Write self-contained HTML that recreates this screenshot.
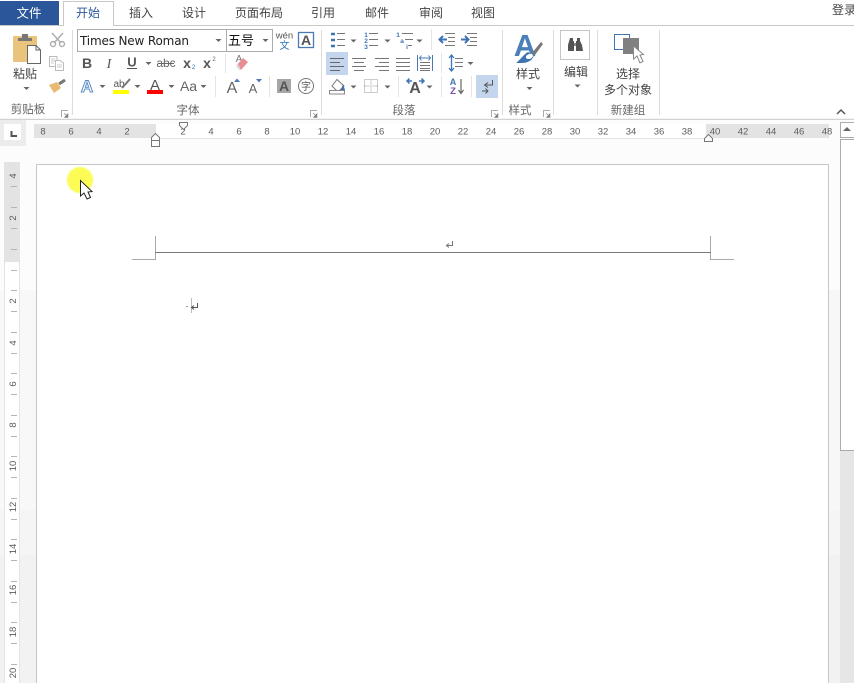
<!DOCTYPE html>
<html><head><meta charset="utf-8"><style>
html,body{margin:0;padding:0;background:#fff;width:854px;height:683px;overflow:hidden}
svg{display:block}
text{font-family:"Liberation Sans","Noto Sans CJK SC",sans-serif;fill:#444}
.t{font-size:12px;text-anchor:middle;fill:#444}
.g{font-size:11.5px;text-anchor:middle;fill:#666}
.r{font-size:9.5px;text-anchor:middle;fill:#5c5c5c}
</style></head><body>
<svg width="854" height="683" viewBox="0 0 854 683" xmlns="http://www.w3.org/2000/svg">
<defs>
<path id="ar" d="M-3 0H3L0 3Z" fill="#666"/>
<g id="dl"><path d="M0.500 7V0.500H7" fill="none" stroke="#aaa"/><path d="M3 3L7 7M7 3.500V7.500H3.500Z" fill="#777" stroke="#888" stroke-width="0.600"/></g>
<filter id="bl"><feGaussianBlur stdDeviation="0.8"/></filter>
</defs>
<rect width="854" height="683" fill="#fff"/>
<!-- tabs -->
<rect x="0" y="1" width="59" height="25" fill="#2b579a"/>
<text x="29" y="17.500" class="t" style="fill:#fff;font-size:12.500px">文件</text>
<path d="M0 25.500H63.500V1.500H113.500V25.500H854" fill="none" stroke="#c8c8c8"/>
<text x="88" y="17" class="t" style="fill:#2b579a">开始</text>
<text x="141" y="17" class="t">插入</text>
<text x="194" y="17" class="t">设计</text>
<text x="259" y="17" class="t">页面布局</text>
<text x="323" y="17" class="t">引用</text>
<text x="377" y="17" class="t">邮件</text>
<text x="431" y="17" class="t">审阅</text>
<text x="483" y="17" class="t">视图</text>
<text x="832" y="14" style="font-size:12px">登录</text>
<path d="M0 119.500H854" stroke="#d2d2d2" stroke-width="1.500"/>
<!-- separators -->
<path d="M72.500 30V115M321.500 30V115M502.500 30V115M553.500 30V115M597.500 30V115M659.500 30V115" stroke="#dcdcdc"/>
<path d="M225.500 54V73M215.500 76V97M269.500 76V97M431.500 29V50M441.500 53V73M398.500 76V97M441.500 76V97M471.500 76V97" stroke="#e4e4e4"/>
<!-- clipboard -->
<rect x="13" y="36" width="24" height="26" rx="1" fill="#eac37c"/>
<path d="M18 41V38H22V34H28V38H32V41Z" fill="#777"/>
<path d="M27.500 45.500H36L40.500 50V63.500H27.500Z" fill="#fff" stroke="#666"/>
<path d="M36 45.500V50H40.500" fill="none" stroke="#666"/>
<text x="25" y="78" class="t">粘贴</text>
<use href="#ar" x="26.500" y="87"/>
<path d="M52 33L61 43M63 33L54 43" stroke="#b0b0b0" stroke-width="1.500"/>
<circle cx="53" cy="44" r="2.500" fill="none" stroke="#b0b0b0" stroke-width="1.500"/><circle cx="62" cy="44" r="2.500" fill="none" stroke="#b0b0b0" stroke-width="1.500"/>
<path d="M49.500 56.500H57V66.500H49.500Z" fill="#fff" stroke="#bbb"/><path d="M55.500 60.500H60L63.500 63V70.500H55.500Z" fill="#fff" stroke="#bbb"/>
<path d="M51 59H55M51 61H55M51 63H54M57 65H62M57 67H62" stroke="#ccc"/>
<path d="M49 85L57 82L61 88L54 93Z" fill="#e9b872"/><path d="M59 84L65 80" stroke="#777" stroke-width="3"/>
<text x="28" y="113" class="g">剪贴板</text>
<use href="#dl" x="61" y="110"/>
<!-- font -->
<rect x="77.500" y="29.500" width="149" height="22" fill="#fff" stroke="#ababab"/>
<rect x="226.500" y="29.500" width="46" height="22" fill="#fff" stroke="#ababab"/>
<text x="80" y="45" textLength="109" lengthAdjust="spacing" style="font-size:12px;fill:#222;font-family:'DejaVu Sans',sans-serif">Times New Roman</text>
<use href="#ar" x="218.500" y="39"/><use href="#ar" x="265.500" y="39"/>
<text x="228" y="45" style="font-size:13px;fill:#111">五号</text>
<text x="284.500" y="38.500" style="font-size:9.500px;text-anchor:middle;fill:#555">wén</text>
<text x="284.500" y="49" style="font-size:10px;text-anchor:middle;fill:#2e75b6">文</text>
<rect x="298.500" y="32.500" width="15" height="15" fill="#fff" stroke="#4a7ab5" stroke-width="1.300"/>
<text x="306" y="45" style="font-size:14px;font-weight:bold;text-anchor:middle;fill:#555">A</text>
<text x="87" y="68" style="font-size:14px;font-weight:bold;text-anchor:middle;fill:#555">B</text>
<text x="109" y="68" style="font-size:14px;font-style:italic;text-anchor:middle;fill:#555;font-family:'Liberation Serif',serif">I</text>
<text x="132" y="66.500" style="font-size:13px;font-weight:bold;text-anchor:middle;fill:#555">U</text><path d="M127 68.500H137" stroke="#555"/>
<use href="#ar" x="148.500" y="62"/>
<text x="166" y="67" style="font-size:12px;text-anchor:middle;fill:#666">abc</text><path d="M158 63.500H174" stroke="#666"/>
<text x="187" y="68" style="font-size:14px;font-weight:bold;text-anchor:middle;fill:#555">x</text><text x="193.500" y="69" style="font-size:6px;text-anchor:middle;fill:#2e75b6">2</text>
<text x="207" y="68" style="font-size:14px;font-weight:bold;text-anchor:middle;fill:#555">x</text><text x="214" y="61" style="font-size:6px;text-anchor:middle;fill:#666">2</text>
<text x="239" y="62" style="font-size:10px;text-anchor:middle;fill:#777">A</text>
<path d="M236 66L243 58L248 62L241 70Z" fill="#e98d94"/><path d="M236 66L239 70H241L238 64" fill="#ddd"/>
<text x="87" y="92" style="font-size:17px;font-weight:bold;text-anchor:middle;fill:#fff;stroke:#5b8bc5;stroke-width:1">A</text>
<use href="#ar" x="102.500" y="85"/>
<text x="119" y="87" style="font-size:10px;text-anchor:middle;fill:#555">ab</text><path d="M122 88L130 79" stroke="#777" stroke-width="2"/>
<rect x="113" y="90" width="16" height="4" fill="#ffff00"/>
<use href="#ar" x="137.500" y="85"/>
<text x="155" y="90" style="font-size:15px;text-anchor:middle;fill:#555">A</text>
<rect x="147" y="90" width="16" height="4" fill="#f00"/>
<use href="#ar" x="171.500" y="85"/>
<text x="188.500" y="91" style="font-size:14px;text-anchor:middle;fill:#666">Aa</text>
<use href="#ar" x="203.500" y="85"/>
<text x="232" y="93" style="font-size:16px;text-anchor:middle;fill:#666">A</text><path d="M234 82H240L237 78.500Z" fill="#4a7ab5"/>
<text x="253" y="93" style="font-size:13px;text-anchor:middle;fill:#666">A</text><path d="M256 79H262L259 82.500Z" fill="#4a7ab5"/>
<rect x="277" y="79" width="14" height="14" fill="#a6a6a6"/>
<text x="284" y="91" style="font-size:14px;font-weight:bold;text-anchor:middle;fill:#555">A</text>
<circle cx="306" cy="86" r="7.500" fill="none" stroke="#777"/>
<text x="306" y="90" style="font-size:10px;text-anchor:middle;fill:#555">字</text>
<text x="188" y="114" class="g">字体</text>
<use href="#dl" x="310" y="110"/>
<!-- paragraph row 1 -->
<path d="M331 34H335M331 40H335M331 46H335" stroke="#3f74b3" stroke-width="2.500"/>
<path d="M337 33.500H345M337 39.500H345M337 45.500H345" stroke="#777"/>
<use href="#ar" x="353.500" y="39.500"/>
<path d="M369 33.500H378M369 39.500H378M369 45.500H378" stroke="#777"/>
<text x="366" y="37" style="font-size:6.500px;text-anchor:middle;fill:#3f74b3;font-weight:bold">1</text><text x="366" y="43" style="font-size:6.500px;text-anchor:middle;fill:#3f74b3;font-weight:bold">2</text><text x="366" y="49" style="font-size:6.500px;text-anchor:middle;fill:#3f74b3;font-weight:bold">3</text>
<use href="#ar" x="387.500" y="39.500"/>
<path d="M402 33.500H413M405 39.500H413M408 45.500H412" stroke="#777"/>
<text x="398" y="37" style="font-size:6.500px;text-anchor:middle;fill:#3f74b3;font-weight:bold">1</text><text x="402" y="43" style="font-size:6.500px;text-anchor:middle;fill:#3f74b3;font-weight:bold">a</text><text x="407" y="49" style="font-size:6.500px;text-anchor:middle;fill:#3f74b3;font-weight:bold">i</text>
<use href="#ar" x="419.500" y="39.500"/>
<path d="M445 33.500H455M448 37.500H455M448 41.500H455M445 45.500H455" stroke="#777"/>
<path d="M447 39.500H440M443 36L439.500 39.500L443 43" fill="none" stroke="#3f74b3" stroke-width="2"/>
<path d="M467 33.500H477M470 37.500H477M470 41.500H477M467 45.500H477" stroke="#777"/>
<path d="M461 39.500H468M465 36L468.500 39.500L465 43" fill="none" stroke="#3f74b3" stroke-width="2"/>
<!-- paragraph row 2 -->
<rect x="326" y="52" width="22" height="23" fill="#c3d6ee"/>
<path d="M330 58.500H344M330 62.500H340M330 66.500H344M330 70.500H340" stroke="#666"/>
<path d="M352 58.500H366M354 62.500H364M352 66.500H366M354 70.500H364" stroke="#777"/>
<path d="M375 58.500H389M379 62.500H389M375 66.500H389M379 70.500H389" stroke="#777"/>
<path d="M396 58.500H410M396 62.500H410M396 66.500H410M396 70.500H410" stroke="#777"/>
<path d="M417.500 55V71M432.500 55V71" stroke="#4a7ab5"/>
<path d="M420 58H430M421.500 55.500L419.500 58L421.500 60.500M428.500 55.500L430.500 58L428.500 60.500" fill="none" stroke="#4a7ab5"/>
<path d="M420 62.500H430M420 65.500H430M420 68.500H430M420 70.500H430" stroke="#777"/>
<path d="M451.500 55V71M449 58L451.500 55L454 58M449 68L451.500 71L454 68" fill="none" stroke="#3f74b3" stroke-width="1.300"/>
<path d="M455 58.500H463M455 62.500H463M455 66.500H463" stroke="#777"/>
<use href="#ar" x="470.500" y="62"/>
<!-- paragraph row 3 -->
<path d="M337 79.500L344 86L338 92L332 86Z" fill="#fff" stroke="#777"/>
<path d="M343 84L345 90H341Z" fill="#3f74b3"/>
<rect x="329.500" y="90.500" width="15" height="3.500" fill="#fff" stroke="#888"/>
<use href="#ar" x="353.500" y="85.500"/>
<path d="M364.500 79.500H377.500V92.500H364.500ZM371 79.500V92.500M364.500 86H377.500" fill="none" stroke="#999" stroke-dasharray="1 1"/>
<use href="#ar" x="387.500" y="85.500"/>
<text x="415" y="93" style="font-size:16px;text-anchor:middle;fill:#555;font-weight:bold">A</text>
<path d="M407 81H412M419 81H424M409.500 78.500L407 81L409.500 83.500M421.500 78.500L424 81L421.500 83.500" fill="none" stroke="#3f74b3" stroke-width="1.500"/>
<use href="#ar" x="429.500" y="85.500"/>
<text x="453" y="85" style="font-size:9px;text-anchor:middle;fill:#3f74b3;font-weight:bold">A</text>
<text x="453" y="94" style="font-size:9.500px;text-anchor:middle;fill:#7a4eac;font-weight:bold">Z</text>
<path d="M461 79V93M458.500 90L461 93.500L463.500 90" fill="none" stroke="#666" stroke-width="1.200"/>
<rect x="476" y="75" width="22" height="23" fill="#c3d6ee"/>
<path d="M492.500 80V85H485M488 82.500L484.500 85L488 87.500" fill="none" stroke="#555"/>
<path d="M482 91H488M485.500 88.500L488 91L485.500 93.500" fill="none" stroke="#555"/>
<text x="404" y="114" class="g">段落</text>
<use href="#dl" x="491" y="110"/>
<!-- styles -->
<text x="525" y="56" style="font-size:31px;font-weight:bold;text-anchor:middle;fill:#4a7fba">A</text>
<path d="M516 63C520 60 524 54 528 52L534 55C533 60 528 63 522 63Z" fill="#3f74b3"/>
<path d="M526 56C529 53 533 53 533 56C532 59 528 60 526 58Z" fill="#fff"/>
<path d="M532 53L541 42L543 44L535 55Z" fill="#777"/>
<text x="528" y="78" class="t">样式</text>
<use href="#ar" x="529.500" y="87"/>
<text x="520" y="114" class="g">样式</text>
<use href="#dl" x="543" y="110"/>
<!-- edit -->
<rect x="560.500" y="30.500" width="29" height="29" fill="#fff" stroke="#c6c6c6"/>
<path d="M570 38H573V41H574V49L574 51H568V45ZM577 38H580V41L582 45L583 51H576V41H577Z" fill="#555"/><path d="M574 43H576V46H574Z" fill="#888"/>
<text x="576" y="76" class="t">编辑</text>
<use href="#ar" x="577.500" y="84.500"/>
<!-- select -->
<rect x="614.500" y="34.500" width="15" height="15" fill="none" stroke="#3f74b3"/>
<rect x="623" y="38" width="16" height="16" fill="#808080"/>
<path d="M633.500 46V59L637 56L640 63L643 61.500L640 55L643.500 54.500Z" fill="#fff" stroke="#888"/>
<text x="628" y="78" class="t">选择</text>
<text x="628" y="94" class="t">多个对象</text>
<text x="628" y="114" class="g">新建组</text>
<path d="M837 114L841 110L845 114" fill="none" stroke="#555" stroke-width="1.500"/>
<!-- canvas backgrounds -->
<rect x="0" y="120" width="854" height="563" fill="#fcfcfc"/>
<rect x="0" y="290" width="36" height="230" fill="#f8f8f8"/>
<rect x="829" y="290" width="11" height="230" fill="#f7f7f7"/>
<rect x="0" y="510" width="36" height="45" fill="#f5f5f5"/>
<rect x="829" y="510" width="11" height="45" fill="#f5f5f5"/>
<rect x="0" y="555" width="36" height="128" fill="#f2f2f2"/>
<rect x="829" y="555" width="11" height="128" fill="#f2f2f2"/>
<!-- horizontal ruler -->
<rect x="0" y="120" width="26" height="26" fill="#ececec"/>
<rect x="4" y="124" width="17" height="16" fill="#fff"/>
<path d="M11.500 131V136H17" fill="none" stroke="#555" stroke-width="2"/>
<rect x="34" y="124" width="122" height="14" fill="#e3e3e3"/>
<rect x="156" y="124" width="550" height="14" fill="#fff"/>
<path d="M156 138.500H706" stroke="#e3e3e3"/>
<rect x="706" y="124" width="123" height="14" fill="#e3e3e3"/>
<text class="r" x="43" y="134.500">8</text><text class="r" x="71" y="134.500">6</text><text class="r" x="99" y="134.500">4</text><text class="r" x="127" y="134.500">2</text>
<text class="r" x="183" y="134.500">2</text><text class="r" x="211" y="134.500">4</text><text class="r" x="239" y="134.500">6</text><text class="r" x="267" y="134.500">8</text><text class="r" x="295" y="134.500">10</text><text class="r" x="323" y="134.500">12</text><text class="r" x="351" y="134.500">14</text><text class="r" x="379" y="134.500">16</text><text class="r" x="407" y="134.500">18</text><text class="r" x="435" y="134.500">20</text><text class="r" x="463" y="134.500">22</text><text class="r" x="491" y="134.500">24</text><text class="r" x="519" y="134.500">26</text><text class="r" x="547" y="134.500">28</text><text class="r" x="575" y="134.500">30</text><text class="r" x="603" y="134.500">32</text><text class="r" x="631" y="134.500">34</text><text class="r" x="659" y="134.500">36</text><text class="r" x="687" y="134.500">38</text><text class="r" x="715" y="134.500">40</text><text class="r" x="743" y="134.500">42</text><text class="r" x="771" y="134.500">44</text><text class="r" x="799" y="134.500">46</text><text class="r" x="827" y="134.500">48</text>
<path d="M179.500 122.500H187.500V125.500L183.500 129.500L179.500 125.500Z" fill="#fff" stroke="#777"/>
<path d="M155.500 133.500L159.500 137.500V146.500H151.500V137.500Z" fill="#fff" stroke="#777"/><path d="M151.500 140.500H159.500" stroke="#777"/>
<path d="M708.500 134.500L712.500 138.500V141.500H704.500V138.500Z" fill="#fff" stroke="#777"/>
<!-- vertical ruler -->
<rect x="4" y="162" width="16" height="100" fill="#e3e3e3"/>
<rect x="4" y="262" width="16" height="421" fill="#e3e3e3"/>
<rect x="5" y="262" width="14" height="421" fill="#fff"/>
<path d="M11 186.500H17M11 207.500H17M11 228.500H17M11 249.500H17M11 270.500H17M11 290.500H17M11 311.500H17M11 332.500H17M11 353.500H17M11 373.500H17M11 394.500H17M11 415.500H17M11 436.500H17M11 456.500H17M11 477.500H17M11 498.500H17M11 519.500H17M11 539.500H17M11 560.500H17M11 581.500H17M11 602.500H17M11 622.500H17M11 643.500H17M11 664.500H17" stroke="#b5b5b5"/>
<text class="r" transform="translate(16 176) rotate(-90)">4</text>
<text class="r" transform="translate(16 218) rotate(-90)">2</text>
<text class="r" transform="translate(16 301) rotate(-90)">2</text>
<text class="r" transform="translate(16 343) rotate(-90)">4</text>
<text class="r" transform="translate(16 384) rotate(-90)">6</text>
<text class="r" transform="translate(16 425) rotate(-90)">8</text>
<text class="r" transform="translate(16 466) rotate(-90)">10</text>
<text class="r" transform="translate(16 507) rotate(-90)">12</text>
<text class="r" transform="translate(16 549) rotate(-90)">14</text>
<text class="r" transform="translate(16 590) rotate(-90)">16</text>
<text class="r" transform="translate(16 632) rotate(-90)">18</text>
<text class="r" transform="translate(16 673) rotate(-90)">20</text>
<!-- page -->
<rect x="36.500" y="164.500" width="792" height="530" fill="#fff" stroke="#c6c6c6"/>
<path d="M155.500 236V259.500H132M710.500 236V259.500H734" fill="none" stroke="#aaa"/>
<path d="M155 252.500H711" stroke="#777"/>
<path d="M452.500 241V245.500H447M449 243.500L446.500 245.500L449 247.500" fill="none" stroke="#777"/>
<path d="M186 306.500H188" stroke="#999"/>
<path d="M191.500 298V313" stroke="#bbb"/>
<path d="M197.500 303V307.500H192M194 305.500L191.500 307.500L194 309.500" fill="none" stroke="#555"/>
<!-- cursor -->
<circle cx="80" cy="180" r="13" fill="#fcfc55" filter="url(#bl)"/>
<path d="M80.500 180.500V196L84 193L87 199L90.500 197.500L88 192L92 191.500Z" fill="#fff" stroke="#222"/>
<!-- scrollbar -->
<rect x="840.500" y="122.500" width="20" height="15" fill="#fff" stroke="#ababab"/>
<path d="M843 131H851L847 127Z" fill="#666"/>
<rect x="840" y="450" width="14" height="233" fill="#e6e6e6"/>
<rect x="840.500" y="139.500" width="20" height="311" fill="#fff" stroke="#ababab"/>
</svg>
</body></html>
